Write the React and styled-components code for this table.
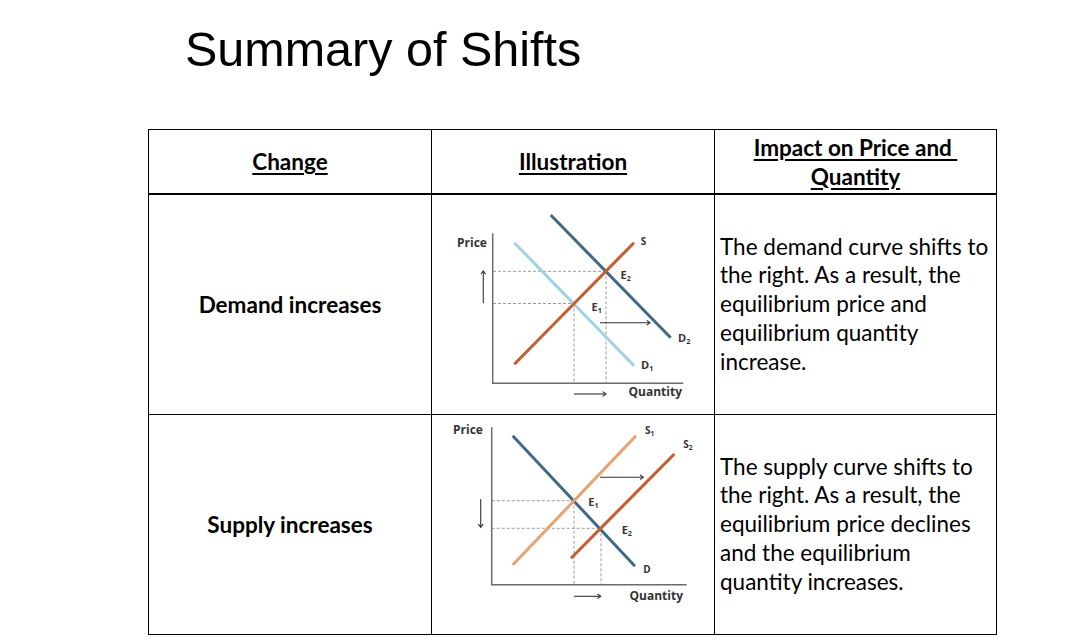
import React from "react";
import styled, { createGlobalStyle } from "styled-components";

const GlobalStyle = createGlobalStyle`
  html, body {
    margin: 0;
    padding: 0;
    background: #fff;
  }
  body {
    font-family: "Lato", "Liberation Sans", sans-serif;
    color: #000;
  }
`;

const Page = styled.div`
  width: 1092px;
  height: 644px;
  overflow: hidden;
  background: #fff;
`;

const Title = styled.h1`
  margin: 0;
  padding: 22px 0 0 185px;
  height: 54px;
  font-family: "Liberation Sans", Arial, sans-serif;
  font-weight: 400;
  font-size: 48.5px;
  line-height: 54px;
  color: #000;
`;

const Table = styled.div`
  margin: 53px 0 0 148px;
  display: grid;
  grid-template-columns: 283px 283px 282px;
  grid-template-rows: 65px 220px 220px;
  width: max-content;
  border-left: 1px solid #000;
  border-top: 1px solid #000;
`;

const Cell = styled.div`
  box-sizing: border-box;
  border-right: 1px solid #000;
  border-bottom: ${(p) => (p.$head ? "2px" : "1px")} solid #000;
  display: flex;
  align-items: center;
  justify-content: ${(p) => (p.$align === "left" ? "flex-start" : "center")};
  text-align: ${(p) => (p.$align === "left" ? "left" : "center")};
  padding: ${(p) => (p.$align === "left" ? "0 0 0 5px" : "0")};
  overflow: hidden;
`;

const HeadText = styled.span`
  font-family: "Lato", "Liberation Sans", sans-serif;
  font-weight: 700;
  font-size: 22.5px;
  line-height: 29px;
  text-decoration: underline;
  text-underline-offset: 3px;
  text-decoration-thickness: 1.5px;
  white-space: pre;
`;

const Label = styled.span`
  font-family: "Lato", "Liberation Sans", sans-serif;
  font-weight: 700;
  font-size: 22.5px;
  line-height: 28px;
`;

const Body = styled.p`
  margin: 0;
  font-family: "Lato", "Liberation Sans", sans-serif;
  font-size: 22.5px;
  line-height: 28.7px;
  white-space: nowrap;
`;

const ChartSvg = styled.svg`
  display: block;
  width: 282px;
  height: 219px;
  font-family: "Open Sans", "Liberation Sans", sans-serif;
  font-weight: 700;
  fill: #333;
`;

const DARK = "#3e6a84";
const LIGHT = "#9fd2e6";
const ORANGE = "#c95b2c";
const PEACH = "#e9a16e";

function Dash({ x1, y1, x2, y2 }) {
  return (
    <line x1={x1} y1={y1} x2={x2} y2={y2} stroke="#9a9a9a" strokeWidth="1" strokeDasharray="3 2" />
  );
}

function Arrow({ x1, y1, x2, y2 }) {
  // small open-head arrow, head at (x2, y2)
  const ang = Math.atan2(y2 - y1, x2 - x1);
  const h = 4;
  const a1 = ang + Math.PI * 0.8;
  const a2 = ang - Math.PI * 0.8;
  const d = `M${x2 + h * Math.cos(a1)} ${y2 + h * Math.sin(a1)} L${x2} ${y2} L${x2 + h * Math.cos(a2)} ${y2 + h * Math.sin(a2)}`;
  return (
    <g stroke="#333" strokeWidth="1.1" fill="none">
      <line x1={x1} y1={y1} x2={x2} y2={y2} />
      <path d={d} />
    </g>
  );
}

function Sub({ x, y, main, sub, size = 11 }) {
  return (
    <text x={x} y={y} fontSize={size}>
      {main}
      {sub && (
        <tspan fontSize={size * 0.65} dy="2">
          {sub}
        </tspan>
      )}
    </text>
  );
}

function DemandChart() {
  return (
    <ChartSvg viewBox="1 1 282 219">
      <Dash x1={62} y1={77.3} x2={175} y2={77.3} />
      <Dash x1={62} y1={109.5} x2={143} y2={109.5} />
      <Dash x1={143} y1={109.5} x2={143} y2={189} />
      <Dash x1={175} y1={77.3} x2={175} y2={189} />
      <path d="M61.7 39.3 L61.7 189.3 L252.3 189.3" stroke="#6b6b6b" strokeWidth="1.5" fill="none" />
      <line x1={83.3} y1={48.7} x2={203} y2={171.7} stroke={LIGHT} strokeWidth="3" />
      <line x1={119.7} y1={21} x2={239.7} y2={143.7} stroke={DARK} strokeWidth="3" />
      <line x1={83.3} y1={170.3} x2={203} y2={48.7} stroke={ORANGE} strokeWidth="3" />
      <Arrow x1={169} y1={128.7} x2={219} y2={128.7} />
      <Arrow x1={52.3} y1={109.3} x2={52.3} y2={77} />
      <Arrow x1={143} y1={200} x2={175} y2={200} />
      <text x={26} y={52.5} fontSize="12">Price</text>
      <text x={197.5} y={202} fontSize="12">Quantity</text>
      <Sub x={209.7} y={51} main="S" size={10} />
      <Sub x={189.5} y={85} main="E" sub="2" />
      <Sub x={160.5} y={117} main="E" sub="1" />
      <Sub x={247} y={148} main="D" sub="2" />
      <Sub x={210} y={175} main="D" sub="1" />
    </ChartSvg>
  );
}

function SupplyChart() {
  return (
    <ChartSvg viewBox="1 1 282 219">
      <Dash x1={60.7} y1={86.7} x2={143} y2={86.7} />
      <Dash x1={60.7} y1={114.3} x2={170} y2={114.3} />
      <Dash x1={143} y1={86.7} x2={143} y2={170.7} />
      <Dash x1={170} y1={114.3} x2={170} y2={170.7} />
      <path d="M60.7 13.3 L60.7 170.7 L255.7 170.7" stroke="#6b6b6b" strokeWidth="1.5" fill="none" />
      <line x1={81.7} y1={21.7} x2={204} y2={152.3} stroke={DARK} strokeWidth="3" />
      <line x1={81.7} y1={151} x2={205} y2={21.7} stroke={PEACH} strokeWidth="3" />
      <line x1={140} y1={144.3} x2={243.3} y2={40} stroke={ORANGE} strokeWidth="3" />
      <Arrow x1={169} y1={63.3} x2={212.3} y2={63.3} />
      <Arrow x1={49.7} y1={85} x2={49.7} y2={113.3} />
      <Arrow x1={143} y1={182.3} x2={169.7} y2={182.3} />
      <text x={22} y={20} fontSize="12">Price</text>
      <text x={198.5} y={185.5} fontSize="12">Quantity</text>
      <Sub x={214} y={20} main="S" sub="1" size={10} />
      <Sub x={252.3} y={34} main="S" sub="2" size={10} />
      <Sub x={157.3} y={92} main="E" sub="1" />
      <Sub x={190.7} y={119.5} main="E" sub="2" />
      <Sub x={212.3} y={158.5} main="D" size={10} />
    </ChartSvg>
  );
}

export default function App() {
  return (
    <Page>
      <GlobalStyle />
      <Title>Summary of Shifts</Title>
      <Table>
        <Cell $head>
          <HeadText>Change</HeadText>
        </Cell>
        <Cell $head>
          <HeadText>Illustration</HeadText>
        </Cell>
        <Cell $head>
          <HeadText>
            {"Impact on Price and \nQuantity"}
          </HeadText>
        </Cell>

        <Cell>
          <Label>Demand increases</Label>
        </Cell>
        <Cell>
          <DemandChart />
        </Cell>
        <Cell $align="left">
          <Body>
            The demand curve shifts to
            <br />
            the right. As a result, the
            <br />
            equilibrium price and
            <br />
            equilibrium quantity
            <br />
            increase.
          </Body>
        </Cell>

        <Cell>
          <Label>Supply increases</Label>
        </Cell>
        <Cell>
          <SupplyChart />
        </Cell>
        <Cell $align="left">
          <Body>
            The supply curve shifts to
            <br />
            the right. As a result, the
            <br />
            equilibrium price declines
            <br />
            and the equilibrium
            <br />
            quantity increases.
          </Body>
        </Cell>
      </Table>
    </Page>
  );
}
